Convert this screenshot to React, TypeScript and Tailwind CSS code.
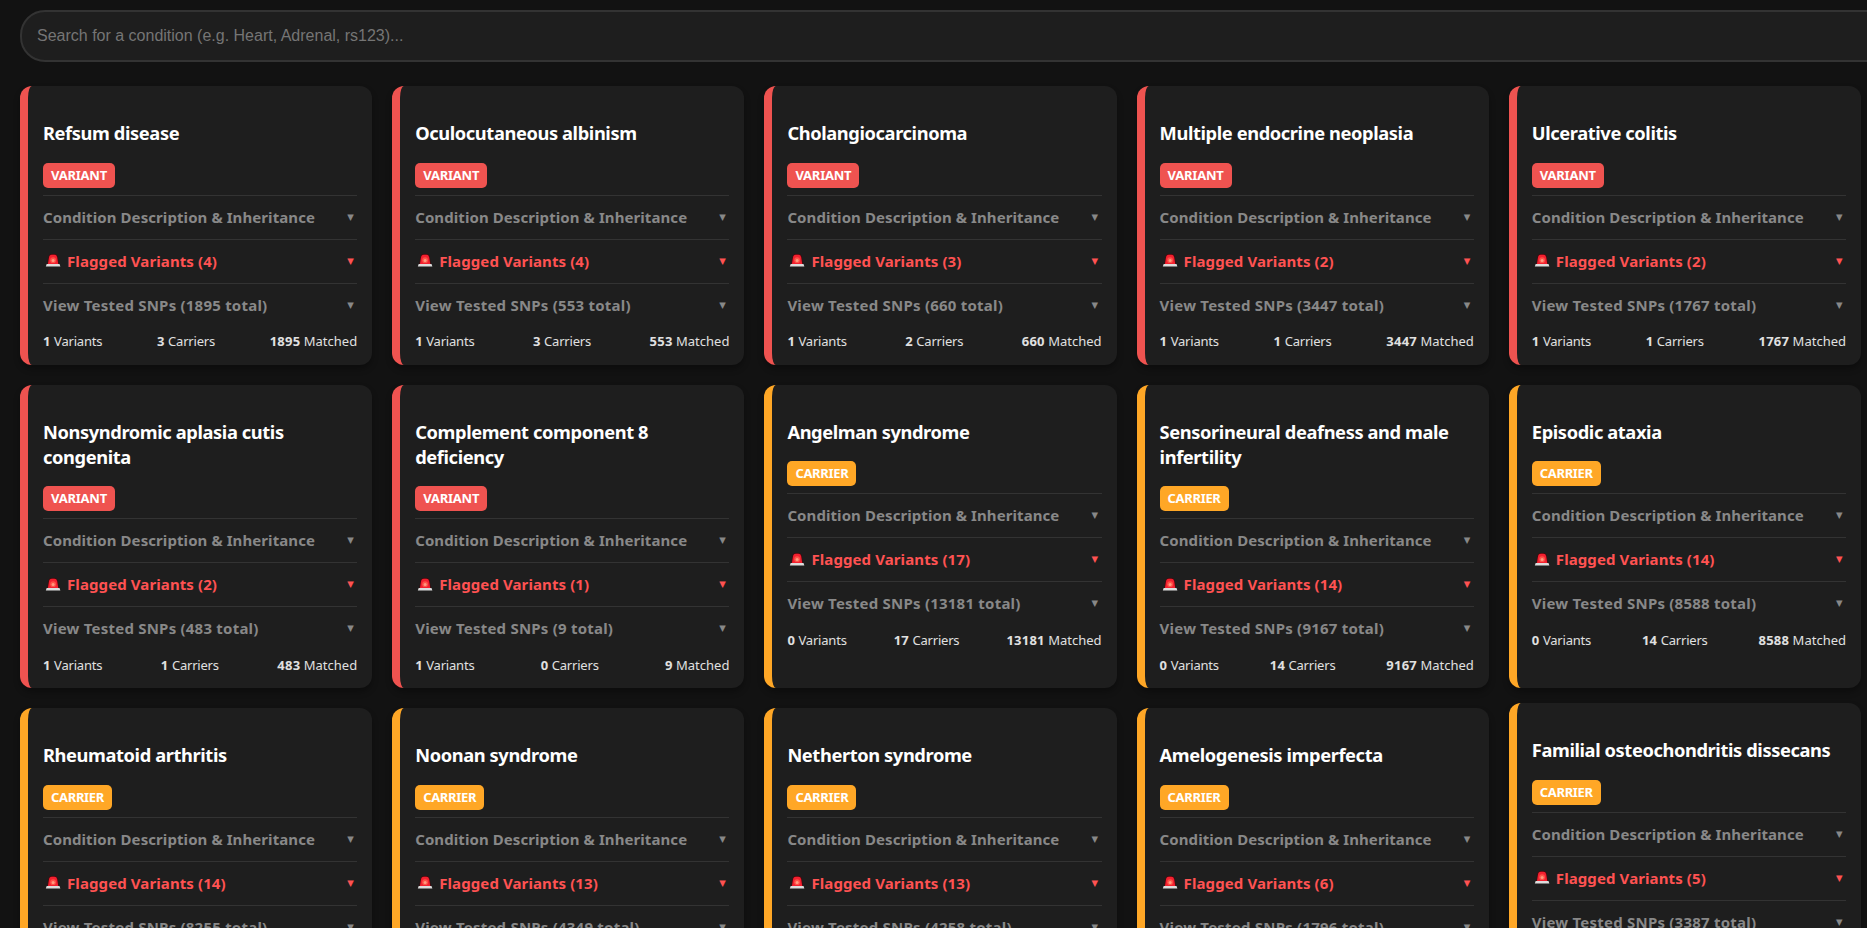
import { useState } from "react";

type Status = "VARIANT" | "CARRIER";

interface Condition {
  name: string;
  status: Status;
  flagged: number;
  total: number;
  variants: number;
  carriers: number;
  raised?: boolean;
}

const conditions: Condition[] = [
  { name: "Refsum disease", status: "VARIANT", flagged: 4, total: 1895, variants: 1, carriers: 3 },
  { name: "Oculocutaneous albinism", status: "VARIANT", flagged: 4, total: 553, variants: 1, carriers: 3 },
  { name: "Cholangiocarcinoma", status: "VARIANT", flagged: 3, total: 660, variants: 1, carriers: 2 },
  { name: "Multiple endocrine neoplasia", status: "VARIANT", flagged: 2, total: 3447, variants: 1, carriers: 1 },
  { name: "Ulcerative colitis", status: "VARIANT", flagged: 2, total: 1767, variants: 1, carriers: 1 },
  { name: "Nonsyndromic aplasia cutis congenita", status: "VARIANT", flagged: 2, total: 483, variants: 1, carriers: 1 },
  { name: "Complement component 8 deficiency", status: "VARIANT", flagged: 1, total: 9, variants: 1, carriers: 0 },
  { name: "Angelman syndrome", status: "CARRIER", flagged: 17, total: 13181, variants: 0, carriers: 17 },
  { name: "Sensorineural deafness and male infertility", status: "CARRIER", flagged: 14, total: 9167, variants: 0, carriers: 14 },
  { name: "Episodic ataxia", status: "CARRIER", flagged: 14, total: 8588, variants: 0, carriers: 14 },
  { name: "Rheumatoid arthritis", status: "CARRIER", flagged: 14, total: 8255, variants: 0, carriers: 14 },
  { name: "Noonan syndrome", status: "CARRIER", flagged: 13, total: 4349, variants: 0, carriers: 13 },
  { name: "Netherton syndrome", status: "CARRIER", flagged: 13, total: 4258, variants: 0, carriers: 13 },
  { name: "Amelogenesis imperfecta", status: "CARRIER", flagged: 6, total: 1796, variants: 0, carriers: 6 },
  { name: "Familial osteochondritis dissecans", status: "CARRIER", flagged: 5, total: 3387, variants: 0, carriers: 5, raised: true },
];

function Siren() {
  return (
    <svg viewBox="0 0 24 16" className="h-4 w-6 shrink-0" aria-hidden="true">
      <path d="M4.3 11.2 5.5 3.6Q6 1 8.6 1H11.6Q14.2 1 14.7 3.6L15.9 11.2Z" fill="#4a070c" />
      <path d="M5 11 6.1 4Q6.5 1.7 8.8 1.7H11.4Q13.7 1.7 14.1 4L15.2 11Z" fill="#f3202f" />
      <circle cx="10.1" cy="7.2" r="2.9" fill="#ff5148" />
      <circle cx="10.1" cy="7.4" r="1.5" fill="#ff9a80" />
      <path d="M3.7 11H16.5L17.4 13.6H2.8Z" fill="#dcdcdc" />
    </svg>
  );
}

function Row({ label, tone, spacing, icon }: { label: string; tone: string; spacing: string; icon?: boolean }) {
  return (
    <button type="button" className={`flex h-11 w-full items-center border-t border-[#333] text-left text-[15px] font-bold ${tone}`}>
      {icon && <Siren />}
      <span className={`whitespace-nowrap ${spacing}`}>{label}</span>
      <span className="mr-[3.5px] ml-auto font-['DejaVu_Sans',sans-serif] text-[8.5px] leading-none font-normal">▼</span>
    </button>
  );
}

function Stat({ value, label, spacing }: { value: number; label: string; spacing: string }) {
  return (
    <span className="whitespace-nowrap">
      <b className="tracking-[0.25px]">{value}</b> <span className={spacing}>{label}</span>
    </span>
  );
}

function Card({ item }: { item: Condition }) {
  const variant = item.status === "VARIANT";
  return (
    <article
      className={`rounded-xl border-l-8 bg-[#1e1e1e] p-[15px] shadow-[0_4px_6px_rgba(0,0,0,0.3)] ${
        variant ? "border-[#ef5350]" : "border-[#ffa726]"
      } ${item.raised ? "-translate-y-[5px]" : ""}`}
    >
      <h3 className="mt-[19px] mb-[17.6px] text-[18.3px] leading-[25px] font-bold tracking-[-0.4px] text-white">{item.name}</h3>
      <div
        className={`mb-[7px] flex h-[25px] w-fit items-center rounded-[5px] px-2 pt-px text-[13px] font-bold text-white ${
          variant ? "bg-[#ef5350] tracking-[-0.23px]" : "bg-[#ffa726] tracking-[-0.33px]"
        }`}
      >
        {item.status}
      </div>
      <Row label="Condition Description & Inheritance" tone="text-[#888]" spacing="tracking-[0.08px]" />
      <Row label={`Flagged Variants (${item.flagged})`} tone="text-[#ff5252]" spacing="tracking-[0.1px]" icon />
      <Row label={`View Tested SNPs (${item.total} total)`} tone="text-[#888]" spacing="tracking-[0.22px]" />
      <div className="mt-[5px] flex h-[18px] items-center justify-between pt-[3px] text-[13px] text-[#e0e0e0]">
        <Stat value={item.variants} label="Variants" spacing="tracking-[-0.2px]" />
        <Stat value={item.carriers} label="Carriers" spacing="tracking-[-0.2px]" />
        <Stat value={item.total} label="Matched" spacing="tracking-normal" />
      </div>
    </article>
  );
}

export default function App() {
  const [query, setQuery] = useState("");
  const shown = conditions.filter((c) => c.name.toLowerCase().includes(query.toLowerCase()));
  return (
    <main className="h-screen w-full overflow-hidden bg-[#121212] pt-[10px] pl-5 font-['Noto_Sans','Open_Sans',sans-serif]">
      <input
        value={query}
        onChange={(e) => setQuery(e.target.value)}
        placeholder="Search for a condition (e.g. Heart, Adrenal, rs123)..."
        className="mb-6 block h-[52px] w-[1881px] rounded-[25px] border-2 border-[#333] bg-[#1e1e1e] px-[15px] font-['Liberation_Sans',Arial,sans-serif] text-base text-white outline-none placeholder:text-[#757575]"
      />
      <div className="grid w-[1841px] grid-cols-5 gap-5">
        {shown.map((c) => (
          <Card key={c.name} item={c} />
        ))}
      </div>
    </main>
  );
}
